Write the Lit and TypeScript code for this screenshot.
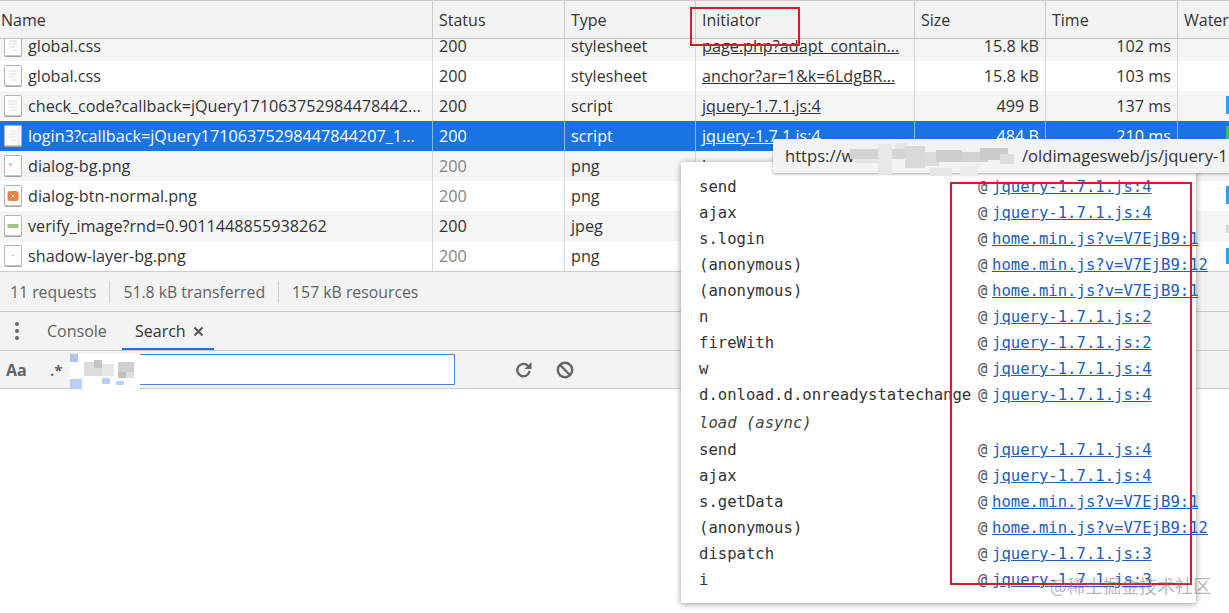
import { LitElement, html, css, svg } from 'lit';
import { customElement } from 'lit/decorators.js';

type Row = {
  name: string;
  status: string;
  type: string;
  init: string;
  size: string;
  time: string;
  icon: 'doc' | 'bg' | 'btn' | 'img' | 'dot';
  dim?: boolean;
  bar?: string;
};

const rows: Row[] = [
  { name: 'global.css', status: '200', type: 'stylesheet', init: 'page.php?adapt_contain...', size: '15.8 kB', time: '102 ms', icon: 'doc' },
  { name: 'global.css', status: '200', type: 'stylesheet', init: 'anchor?ar=1&k=6LdgBR...', size: '15.8 kB', time: '103 ms', icon: 'doc' },
  { name: 'check_code?callback=jQuery171063752984478442...', status: '200', type: 'script', init: 'jquery-1.7.1.js:4', size: '499 B', time: '137 ms', icon: 'doc', bar: '#29a3ec' },
  { name: 'login3?callback=jQuery17106375298447844207_1...', status: '200', type: 'script', init: 'jquery-1.7.1.js:4', size: '484 B', time: '210 ms', icon: 'doc', bar: '#2fc26b' },
  { name: 'dialog-bg.png', status: '200', type: 'png', init: 'l', size: '', time: '', icon: 'bg', dim: true },
  { name: 'dialog-btn-normal.png', status: '200', type: 'png', init: '', size: '', time: '', icon: 'btn', dim: true },
  { name: 'verify_image?rnd=0.9011448855938262', status: '200', type: 'jpeg', init: '', size: '', time: '', icon: 'img' },
  { name: 'shadow-layer-bg.png', status: '200', type: 'png', init: '', size: '', time: '', icon: 'dot', dim: true },
];

const jq = (n: number) => `jquery-1.7.1.js:${n}`;
const hm = (n: number) => `home.min.js?v=V7EjB9:${n}`;

const stack: [string, string][] = [
  ['send', jq(4)],
  ['ajax', jq(4)],
  ['s.login', hm(1)],
  ['(anonymous)', hm(12)],
  ['(anonymous)', hm(1)],
  ['n', jq(2)],
  ['fireWith', jq(2)],
  ['w', jq(4)],
  ['d.onload.d.onreadystatechange', jq(4)],
];

const stack2: [string, string][] = [
  ['send', jq(4)],
  ['ajax', jq(4)],
  ['s.getData', hm(1)],
  ['(anonymous)', hm(12)],
  ['dispatch', jq(3)],
  ['i', jq(3)],
];

// blur blocks: x, y, w, h, colour
const mosaic: [number, number, number, number, string][] = [
  [850, 149, 60, 10, '#d4d4d4'],
  [855, 159, 30, 4, '#e4e4e4'],
  [878, 144, 14, 30, '#e8e8e8'],
  [895, 143, 12, 6, '#e6e6e6'],
  [905, 146, 20, 22, '#d9d9d9'],
  [925, 152, 14, 14, '#dcdcdc'],
  [930, 168, 22, 8, '#e6e6e6'],
  [936, 150, 26, 12, '#cfcfcf'],
  [962, 152, 26, 10, '#d2d2d2'],
  [980, 148, 28, 12, '#cccccc'],
  [1000, 154, 14, 10, '#dedede'],
  [960, 166, 18, 10, '#ececec'],
];

const searchMosaic: [number, number, number, number, string][] = [
  [70, 354, 70, 35, '#ffffff'],
  [70, 354, 8, 8, '#a9c6f2'],
  [70, 379, 12, 10, '#b8d0f5'],
  [102, 378, 8, 6, '#b8d0f5'],
  [84, 362, 18, 14, '#dcdcdc'],
  [94, 360, 8, 8, '#c4c4c4'],
  [102, 364, 12, 12, '#e6e6e6'],
  [118, 362, 16, 10, '#d0d0d0'],
  [118, 372, 8, 6, '#c0c0c0'],
  [126, 372, 8, 6, '#dedede'],
  [116, 381, 8, 4, '#b8d0f5'],
];

function fileIcon(kind: Row['icon']) {
  const inner = {
    doc: svg`<path d="M5 6h8M5 9h8M5 12h6M7 15h6" stroke="#dcdcdc" stroke-width="1"/>`,
    bg: svg`<rect x="5" y="8" width="3" height="3" fill="#f0c4a8"/>`,
    btn: svg`<rect x="3.5" y="6" width="11" height="10" rx="2.5" fill="#ee8046"/><path d="M7.5 9.5l3 3m0-3l-3 3" stroke="#ffe2d0" stroke-width="1"/>`,
    img: svg`<rect x="3.5" y="9" width="11" height="4" fill="#9cc487"/>`,
    dot: svg`<rect x="8.5" y="10" width="1" height="1" fill="#777"/>`,
  }[kind];
  return html`<svg class="file" width="18" height="22" viewBox="0 0 18 22">
    <rect x="0.5" y="0.5" width="17" height="21" rx="1" fill="#fff" stroke="#b4b4b4"/>
    <path d="M1 21h16" stroke="#8e8e8e"/>
    ${inner}
  </svg>`;
}

@customElement('app-root')
export class AppRoot extends LitElement {
  static styles = css`
    :host {
      display: block;
      position: relative;
      width: 1229px;
      height: 613px;
      overflow: hidden;
      background: #fff;
      color: #333;
      font-family: 'Open Sans', 'Noto Sans', sans-serif;
      font-size: 16px;
    }
    .cols {
      display: grid;
      grid-template-columns: 432px 132px 131px 219px 131px 132px 52px;
    }
    .head {
      height: 37px;
      border-top: 1px solid #ccc;
      border-bottom: 1px solid #c4c4c4;
      background: #f3f3f3;
    }
    .head div {
      height: 37px;
      line-height: 39px;
      padding-left: 6px;
      border-left: 1px solid #ccc;
      white-space: nowrap;
      overflow: hidden;
    }
    .head div:first-child {
      border-left: 0;
      padding-left: 1px;
    }
    .body {
      height: 232px;
      overflow: hidden;
      border-bottom: 1px solid #ccc;
      font-size: 16.2px;
    }
    .row {
      height: 30px;
      line-height: 30px;
    }
    .row:first-child {
      margin-top: -8px;
    }
    .row:nth-child(odd) {
      background: #f5f5f5;
    }
    .row > div {
      position: relative;
      padding: 0 6px;
      border-left: 1px solid #d8d8d8;
      white-space: nowrap;
      overflow: hidden;
    }
    .row > div:first-child {
      display: flex;
      align-items: center;
      gap: 6px;
      padding: 0 0 0 4px;
      border-left: 0;
    }
    .row.sel {
      background: #1a73e3;
      color: #fff;
    }
    .row.sel > div {
      border-left-color: #8ab8f0;
    }
    .file {
      flex: none;
    }
    .dim {
      color: #858585;
    }
    .num {
      text-align: right;
    }
    .init {
      text-decoration: underline;
    }
    .bar {
      position: absolute;
      right: 0;
      top: 5px;
      width: 3px;
      height: 18px;
    }
    .summary {
      display: flex;
      align-items: center;
      height: 39px;
      padding-left: 10px;
      background: #f3f3f3;
      border-bottom: 1px solid #c8c8c8;
      color: #5f6368;
      font-size: 15.8px;
    }
    .summary span {
      padding-right: 13px;
      margin-right: 13px;
      border-right: 1px solid #d0d0d0;
      line-height: 22px;
    }
    .summary span:last-child {
      border-right: 0;
    }
    .tabs {
      display: flex;
      align-items: center;
      height: 38px;
      background: #f3f3f3;
      border-bottom: 1px solid #ccc;
      color: #5f6368;
    }
    .dots {
      margin: 0 27px 0 14px;
    }
    .tab {
      height: 38px;
      line-height: 38px;
      box-sizing: border-box;
      padding: 0 10px 0 0;
    }
    .tab.first {
      padding-right: 0;
      width: 75px;
    }
    .tab.on {
      display: flex;
      align-items: center;
      gap: 7px;
      width: 92px;
      padding: 2px 0 0 13px;
      border-bottom: 2px solid #1a73e3;
      color: #333;
    }
    .tools {
      display: flex;
      align-items: center;
      height: 37px;
      background: #f3f3f3;
      border-bottom: 1px solid #ccc;
      color: #5f6368;
    }
    .aa {
      margin-left: 6px;
      width: 44px;
      font-weight: 700;
      font-size: 16px;
    }
    .re {
      width: 20px;
      font-weight: 700;
      font-size: 15px;
    }
    .box {
      box-sizing: border-box;
      width: 385px;
      height: 31px;
      background: #fff;
      border: 1px solid #4a86cf;
    }
    .tool-ico {
      display: flex;
      gap: 21px;
      margin-left: 59px;
    }
    .block {
      position: absolute;
    }
    .pop {
      position: absolute;
      left: 681px;
      top: 162px;
      width: 515px;
      height: 441px;
      box-sizing: border-box;
      padding: 12px 0 0 18px;
      background: #fff;
      border-radius: 2px;
      box-shadow: 0 1px 6px rgba(0, 0, 0, 0.4);
      font-family: 'DejaVu Sans Mono', 'Liberation Mono', monospace;
      font-size: 15.6px;
      color: #333;
    }
    .pop::before {
      content: '';
      position: absolute;
      left: 95px;
      top: -7px;
      width: 14px;
      height: 14px;
      background: #fff;
      transform: rotate(45deg);
      box-shadow: -1px -1px 2px rgba(0, 0, 0, 0.15);
    }
    .st {
      display: grid;
      grid-template-columns: 279px 14px 1fr;
      grid-auto-rows: 26px;
      line-height: 26px;
      white-space: nowrap;
    }
    .st a {
      color: #2060b8;
      text-decoration: underline;
    }
    .at {
      color: #555;
    }
    .asy {
      height: 29px;
      line-height: 30px;
      font-style: italic;
      color: #444;
    }
    .tip {
      position: absolute;
      left: 773px;
      top: 139px;
      width: 470px;
      height: 34px;
      box-sizing: border-box;
      padding-left: 12px;
      line-height: 34px;
      font-size: 16.6px;
      background: #f3f3f3;
      border-radius: 2px;
      box-shadow: 0 1px 3px rgba(0, 0, 0, 0.35);
      white-space: nowrap;
      overflow: hidden;
    }
    .tip-path {
      position: absolute;
      left: 249px;
      top: 0;
    }
    .red {
      position: absolute;
      box-sizing: border-box;
      border: 2px solid #d0202e;
    }
    .mark {
      position: absolute;
      left: 1050px;
      top: 573px;
      font-family: 'Noto Sans CJK SC', sans-serif;
      font-size: 18px;
      line-height: 24px;
      color: rgba(120, 120, 120, 0.55);
      white-space: nowrap;
    }
  `;

  private cell(r: Row) {
    return html`<div class="cols row ${r.name.startsWith('login3') ? 'sel' : ''}">
      <div>${fileIcon(r.icon)}<span>${r.name}</span></div>
      <div class=${r.dim ? 'dim' : ''}>${r.status}</div>
      <div>${r.type}</div>
      <div><span class="init">${r.init}</span></div>
      <div class="num">${r.size}</div>
      <div class="num">${r.time}</div>
      <div>${r.bar ? html`<i class="bar" style="background:${r.bar}"></i>` : ''}</div>
    </div>`;
  }

  private line([fn, link]: [string, string]) {
    return html`<span>${fn}</span><span class="at">@</span><a>${link}</a>`;
  }

  private blocks(list: [number, number, number, number, string][]) {
    return list.map(
      ([x, y, w, h, c]) =>
        html`<i class="block" style="left:${x}px;top:${y}px;width:${w}px;height:${h}px;background:${c}"></i>`
    );
  }

  render() {
    return html`
      <div class="cols head">
        <div>Name</div><div>Status</div><div>Type</div><div>Initiator</div><div>Size</div><div>Time</div><div>Waterfall</div>
      </div>
      <div class="body">${rows.map((r) => this.cell(r))}</div>
      <div class="summary">
        <span>11 requests</span><span>51.8 kB transferred</span><span>157 kB resources</span>
      </div>
      <div class="tabs">
        <svg class="dots" width="6" height="20" viewBox="0 0 6 20" fill="#666">
          <circle cx="3" cy="3" r="2"/><circle cx="3" cy="10" r="2"/><circle cx="3" cy="17" r="2"/>
        </svg>
        <div class="tab first">Console</div>
        <div class="tab on">
          Search
          <svg width="11" height="11" viewBox="0 0 11 11"><path d="M1.5 1.5l8 8m0-8l-8 8" stroke="#555" stroke-width="2"/></svg>
        </div>
      </div>
      <div class="tools">
        <div class="aa">Aa</div>
        <div class="re">.*</div>
        <div class="box"></div>
        <div class="tool-ico">
          <svg width="20" height="20" viewBox="0 0 20 20" fill="none">
            <path d="M15.6 11a6.2 6.2 0 1 1-1.6-5.2" stroke="#666" stroke-width="2.4"/>
            <path d="M17.5 2v7h-7z" fill="#666"/>
          </svg>
          <svg width="20" height="20" viewBox="0 0 20 20" fill="none">
            <circle cx="10" cy="10" r="7.2" stroke="#666" stroke-width="2.4"/>
            <path d="M5 5l10 10" stroke="#666" stroke-width="2.4"/>
          </svg>
        </div>
      </div>
      ${this.blocks(searchMosaic)}

      <i class="block" style="left:1226px;top:186px;width:3px;height:18px;background:#29a3ec"></i>
      <i class="block" style="left:1226px;top:225px;width:3px;height:8px;background:#d8d8d8"></i>
      <i class="block" style="left:1226px;top:248px;width:3px;height:16px;background:#29a3ec"></i>

      <div class="pop">
        <div class="st">${stack.map((s) => this.line(s))}</div>
        <div class="asy">load (async)</div>
        <div class="st">${stack2.map((s) => this.line(s))}</div>
      </div>

      <div class="tip">https://w<span class="tip-path">/oldimagesweb/js/jquery-1.7.1.js</span></div>
      ${this.blocks(mosaic)}

      <div class="red" style="left:690px;top:7px;width:110px;height:39px"></div>
      <div class="red" style="left:950px;top:182px;width:242px;height:403px"></div>
      <div class="mark">@稀土掘金技术社区</div>
    `;
  }
}

declare global {
  interface HTMLElementTagNameMap {
    'app-root': AppRoot;
  }
}
